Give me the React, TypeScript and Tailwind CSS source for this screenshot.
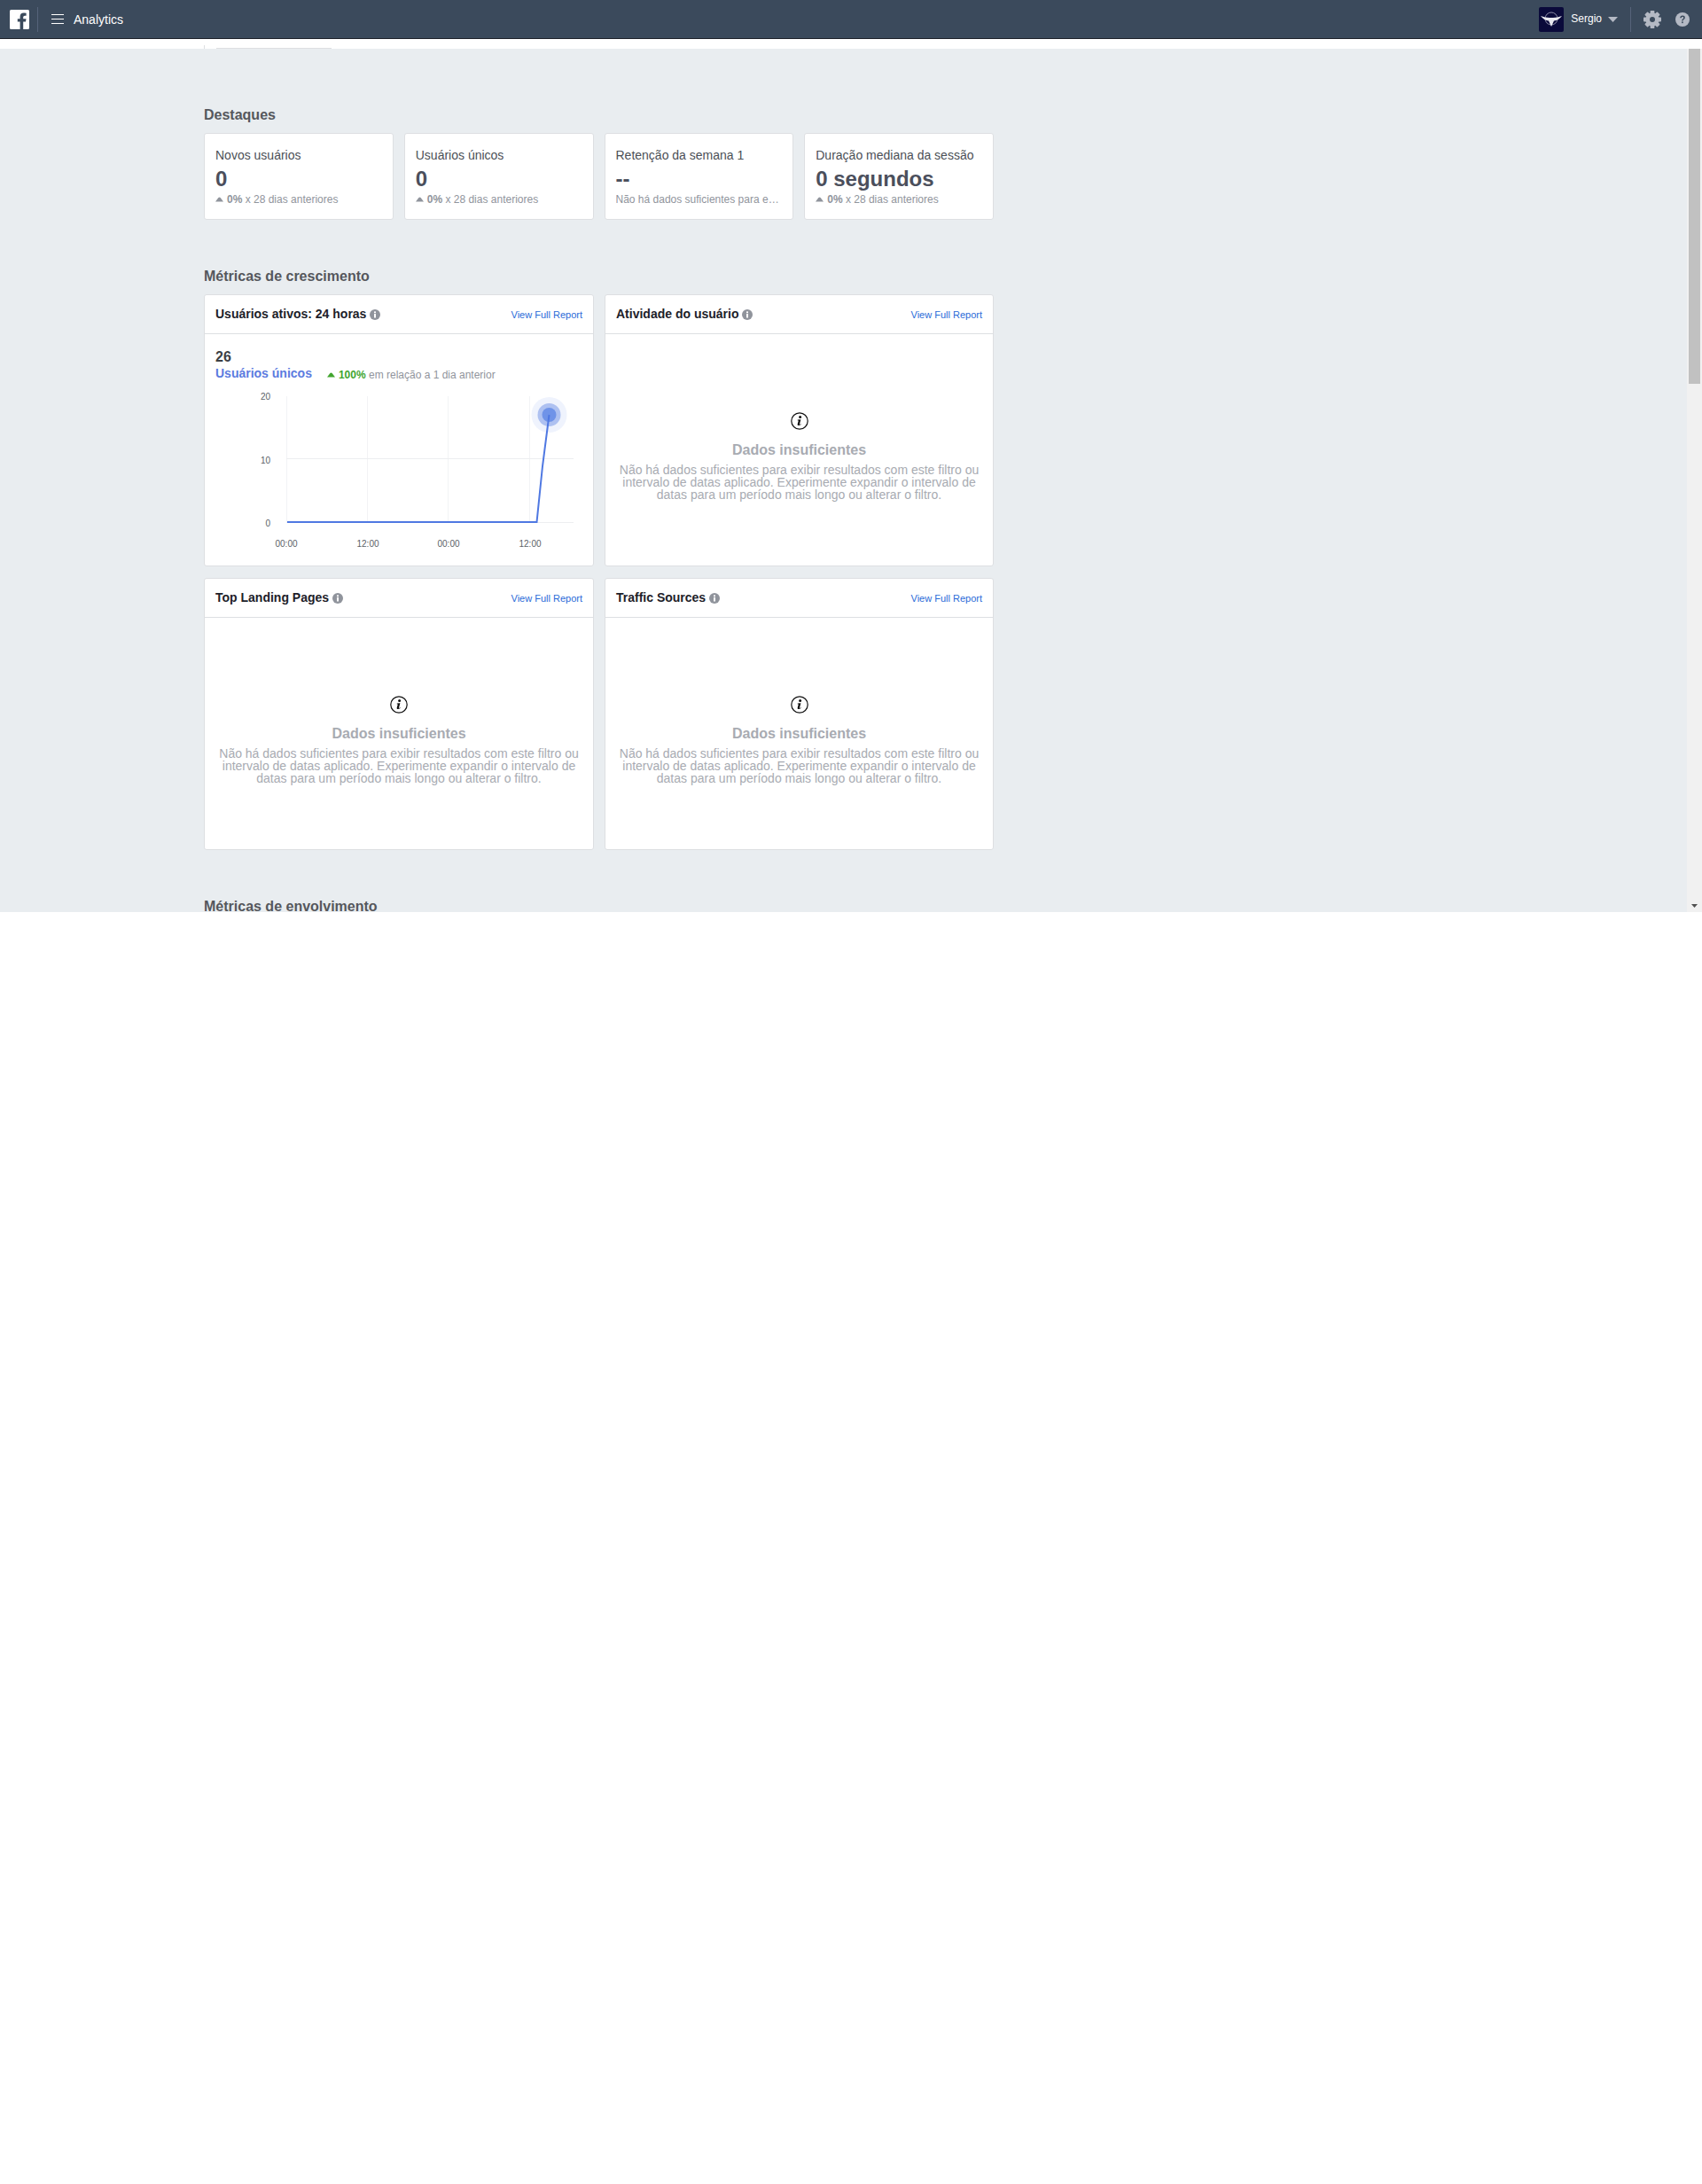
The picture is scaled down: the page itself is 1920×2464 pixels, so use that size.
const font = '[font-family:"Liberation_Sans",Arial,sans-serif]'

const highlights = [
  { title: 'Novos usuários', value: '0', delta: '0%' },
  { title: 'Usuários únicos', value: '0', delta: '0%' },
  { title: 'Retenção da semana 1', value: '--', note: 'Não há dados suficientes para exibir resultados' },
  { title: 'Duração mediana da sessão', value: '0 segundos', delta: '0%' },
]

const UpArrow = ({ color }: { color: string }) => (
  <svg width="9" height="6" viewBox="0 0 9 6" className="shrink-0">
    <path d="M0 5.5 L3.4 1 Q4.5 0 5.6 1 L9 5.5 Z" fill={color} />
  </svg>
)

const SmallInfo = () => (
  <svg width="12" height="12" viewBox="0 0 12 12" className="shrink-0">
    <circle cx="6" cy="6" r="6" fill="#90949c" />
    <rect x="5" y="5" width="2" height="4.5" fill="#fff" />
    <rect x="5" y="2.4" width="2" height="1.8" fill="#fff" />
  </svg>
)

const BigInfo = () => (
  <svg width="20" height="20" viewBox="0 0 20 20">
    <circle cx="10" cy="10" r="9.2" fill="#fff" stroke="#111" strokeWidth="1.2" />
    <circle cx="10.6" cy="5.6" r="1.5" fill="#111" />
    <path d="M7.8 8.6 L11.4 8.2 L10 13.4 Q9.9 14.2 11.6 13.2 L11.8 13.8 Q9.8 15.4 8.2 15 Q7.2 14.6 7.8 13 L8.8 9.6 L7.8 9.5 Z" fill="#111" />
  </svg>
)

const HighlightCard = ({ item }: { item: (typeof highlights)[number] }) => (
  <div className="h-[98px] min-w-0 flex-1 rounded-[3px] border border-[#dddfe2] bg-white pl-[12px] pr-[12px] pt-[15px]">
    <div className="text-[14px] leading-[18px] text-[#4b4f56]">{item.title}</div>
    <div className="mt-[4px] text-[24px] font-bold leading-[27px] text-[#4b4f5c]">{item.value}</div>
    {item.note ? (
      <div className="mt-[2px] truncate text-[12px] leading-[16px] text-[#90949c]">{item.note}</div>
    ) : (
      <div className="mt-[2px] flex items-center gap-[4px] text-[12px] leading-[16px] text-[#90949c]">
        <UpArrow color="#90949c" />
        <span>
          <b>{item.delta}</b> x 28 dias anteriores
        </span>
      </div>
    )}
  </div>
)

const PanelHeader = ({ title }: { title: string }) => (
  <div className="flex h-[44px] items-center justify-between border-b border-[#dddfe2] pl-[12px] pr-[12px]">
    <div className="flex items-center gap-[4px]">
      <span className="text-[14px] font-bold text-[#1d2129]">{title}</span>
      <SmallInfo />
    </div>
    <a className="pt-[1px] text-[11px] text-[#2a6bd8]">View Full Report</a>
  </div>
)

const EmptyPanel = ({ title }: { title: string }) => (
  <div className="h-[307px] min-w-0 rounded-[3px] border border-[#dddfe2] bg-white">
    <PanelHeader title={title} />
    <div className="flex flex-col items-center px-[14px] pt-[88px] text-center">
      <BigInfo />
      <div className="mt-[13px] text-[16px] font-bold leading-[20px] text-[#a8abb2]">Dados insuficientes</div>
      <div className="mt-[5px] text-[14px] leading-[14px] text-[#a8abb2]">
        Não há dados suficientes para exibir resultados com este filtro ou intervalo de datas aplicado. Experimente
        expandir o intervalo de datas para um período mais longo ou alterar o filtro.
      </div>
    </div>
  </div>
)

const ActiveUsersChart = () => (
  <svg width="437" height="190" viewBox="0 0 437 190" className="mt-[12px] block">
    {[92, 183, 274, 366].map((x) => (
      <line key={x} x1={x + 0.5} y1="6" x2={x + 0.5} y2="148" stroke="#f2f3f5" />
    ))}
    {[76, 148].map((y) => (
      <line key={y} x1="92" y1={y + 0.5} x2="416" y2={y + 0.5} stroke="#edeef0" />
    ))}
    <g fontFamily="Liberation Sans, Arial, sans-serif" fontSize="10" fill="#5b5f67">
      <text x="74" y="10" textAnchor="end">20</text>
      <text x="74" y="82" textAnchor="end">10</text>
      <text x="74" y="153" textAnchor="end">0</text>
      <text x="92" y="176" textAnchor="middle">00:00</text>
      <text x="184" y="176" textAnchor="middle">12:00</text>
      <text x="275" y="176" textAnchor="middle">00:00</text>
      <text x="367" y="176" textAnchor="middle">12:00</text>
    </g>
    <circle cx="388.5" cy="27" r="20" fill="#eff3fd" />
    <circle cx="388.5" cy="27" r="13" fill="#aec1f1" />
    <circle cx="388.5" cy="27" r="8" fill="#6f93e8" />
    <path d="M93 148 H374.5 L381 85 L388.5 27" fill="none" stroke="#4f78e2" strokeWidth="2" />
  </svg>
)

const ActiveUsersPanel = () => (
  <div className="h-[307px] min-w-0 rounded-[3px] border border-[#dddfe2] bg-white">
    <PanelHeader title="Usuários ativos: 24 horas" />
    <div className="pl-[12px] pt-[16px] text-[16px] font-bold leading-[20px] text-[#3c3f45]">26</div>
    <div className="flex h-[16px] items-center pl-[12px]">
      <span className="text-[14px] font-bold text-[#5b7be0]">Usuários únicos</span>
      <span className="ml-[17px] flex items-center gap-[4px] pt-[4px] text-[12px] text-[#90949c]">
        <UpArrow color="#42a52f" />
        <span>
          <b className="text-[#42a52f]">100%</b> em relação a 1 dia anterior
        </span>
      </span>
    </div>
    <ActiveUsersChart />
  </div>
)

const SectionTitle = ({ children, className }: { children: string; className: string }) => (
  <h2 className={`text-[16px] font-bold leading-[20px] text-[#55575c] ${className}`}>{children}</h2>
)

const Gear = () => (
  <svg width="20" height="20" viewBox="0 0 20 20" className="ml-[14px] shrink-0">
    {[0, 45, 90, 135].map((angle) => (
      <rect key={angle} x="7.6" y="0" width="4.8" height="20" rx="0.8" fill="#b4b9c4" transform={`rotate(${angle} 10 10)`} />
    ))}
    <circle cx="10" cy="10" r="7.6" fill="#b4b9c4" />
    <circle cx="10" cy="10" r="3" fill="#3b4a5c" />
  </svg>
)

const TopBar = () => (
  <header className="flex h-[44px] items-center border-b border-[#1d2129] bg-[#3b4a5c] pl-[11px] pr-[14px]">
    <svg width="22" height="22" viewBox="0 0 22 22" className="shrink-0">
      <path
        d="M1.5 0 H20.5 Q22 0 22 1.5 V20.5 Q22 22 20.5 22 H15.2 V13.6 H18 L18.5 10.3 H15.2 V8.3 Q15.2 6.7 17 6.7 H18.6 V3.8 Q17.4 3.6 16 3.6 Q11.6 3.6 11.6 8 V10.3 H8.8 V13.6 H11.6 V22 H1.5 Q0 22 0 20.5 V1.5 Q0 0 1.5 0 Z"
        fill="#fff"
      />
    </svg>
    <div className="ml-[9px] h-[28px] w-px bg-[#56637a]" />
    <div className="ml-[15px] flex w-[14px] flex-col gap-[4px]">
      <div className="h-px bg-white" />
      <div className="h-px bg-white" />
      <div className="h-px bg-white" />
    </div>
    <span className="ml-[11px] pt-[1px] text-[14px] text-white">Analytics</span>
    <div className="ml-auto flex items-center">
      <svg width="28" height="28" viewBox="0 0 28 28" className="shrink-0">
        <rect width="28" height="28" rx="2" fill="#0a0a3a" />
        <circle cx="14" cy="13" r="7" fill="none" stroke="#8a8aa5" strokeWidth="1" />
        <path d="M2 10 Q8 12.5 14 12 Q20 12.5 26 10 Q22 15 17 15.5 L14 22 L11 15.5 Q6 15 2 10 Z" fill="#e8e8ee" />
      </svg>
      <span className="ml-[8px] pb-[1px] text-[12px] text-white">Sergio</span>
      <svg width="11" height="6" viewBox="0 0 11 6" className="ml-[7px] shrink-0">
        <path d="M0 0 H11 L5.5 6 Z" fill="#b4b9c4" />
      </svg>
      <div className="ml-[14px] h-[28px] w-px bg-[#56637a]" />
      <Gear />
      <svg width="16" height="16" viewBox="0 0 16 16" className="ml-[16px] shrink-0">
        <circle cx="8" cy="8" r="8" fill="#b4b9c4" />
        <path d="M5.2 6.2 Q5.4 3.6 8 3.6 Q10.8 3.6 10.8 5.9 Q10.8 7.2 9.4 8 Q8.6 8.5 8.6 9.6 H7.2 Q7.2 7.9 8.3 7.2 Q9.2 6.7 9.2 5.9 Q9.2 5 8 5 Q6.9 5 6.7 6.2 Z" fill="#3b4a5c" />
        <rect x="7.1" y="10.4" width="1.6" height="1.7" fill="#3b4a5c" />
      </svg>
    </div>
  </header>
)

const App = () => (
  <div className={`h-[2464px] bg-white ${font}`}>
    <TopBar />
    <div className="flex h-[985px]">
      <div className="min-w-0 flex-1 overflow-hidden">
        <div className="flex h-[11px] items-end pl-[230px]">
          <div className="h-[4px] w-px bg-[#dddfe2]" />
          <div className="ml-[13px] h-px w-[130px] bg-[#dddfe2]" />
        </div>
        <main className="h-[974px] overflow-hidden bg-[#e9edf0] pl-[230px]">
          <div className="w-[891px]">
            <SectionTitle className="pt-[65px]">Destaques</SectionTitle>
            <div className="mt-[10px] flex gap-[12px]">
              {highlights.map((item) => (
                <HighlightCard key={item.title} item={item} />
              ))}
            </div>
            <SectionTitle className="mt-[54px]">Métricas de crescimento</SectionTitle>
            <div className="mt-[10px] grid grid-cols-[440px_439px] gap-x-[12px] gap-y-[13px]">
              <ActiveUsersPanel />
              <EmptyPanel title="Atividade do usuário" />
              <EmptyPanel title="Top Landing Pages" />
              <EmptyPanel title="Traffic Sources" />
            </div>
            <div className="mt-[54px] h-[20px] overflow-hidden">
              <SectionTitle className="">Métricas de envolvimento</SectionTitle>
            </div>
          </div>
        </main>
      </div>
      <div className="flex w-[17px] flex-col bg-[#f1f1f1]">
        <div className="h-[11px] bg-white" />
        <div className="mx-[2px] h-[378px] bg-[#c1c1c1]" />
        <div className="mt-auto mb-[5px] flex justify-center">
          <svg width="7" height="4" viewBox="0 0 7 4">
            <path d="M0 0 H7 L3.5 4 Z" fill="#505050" />
          </svg>
        </div>
      </div>
    </div>
  </div>
)

export default App
